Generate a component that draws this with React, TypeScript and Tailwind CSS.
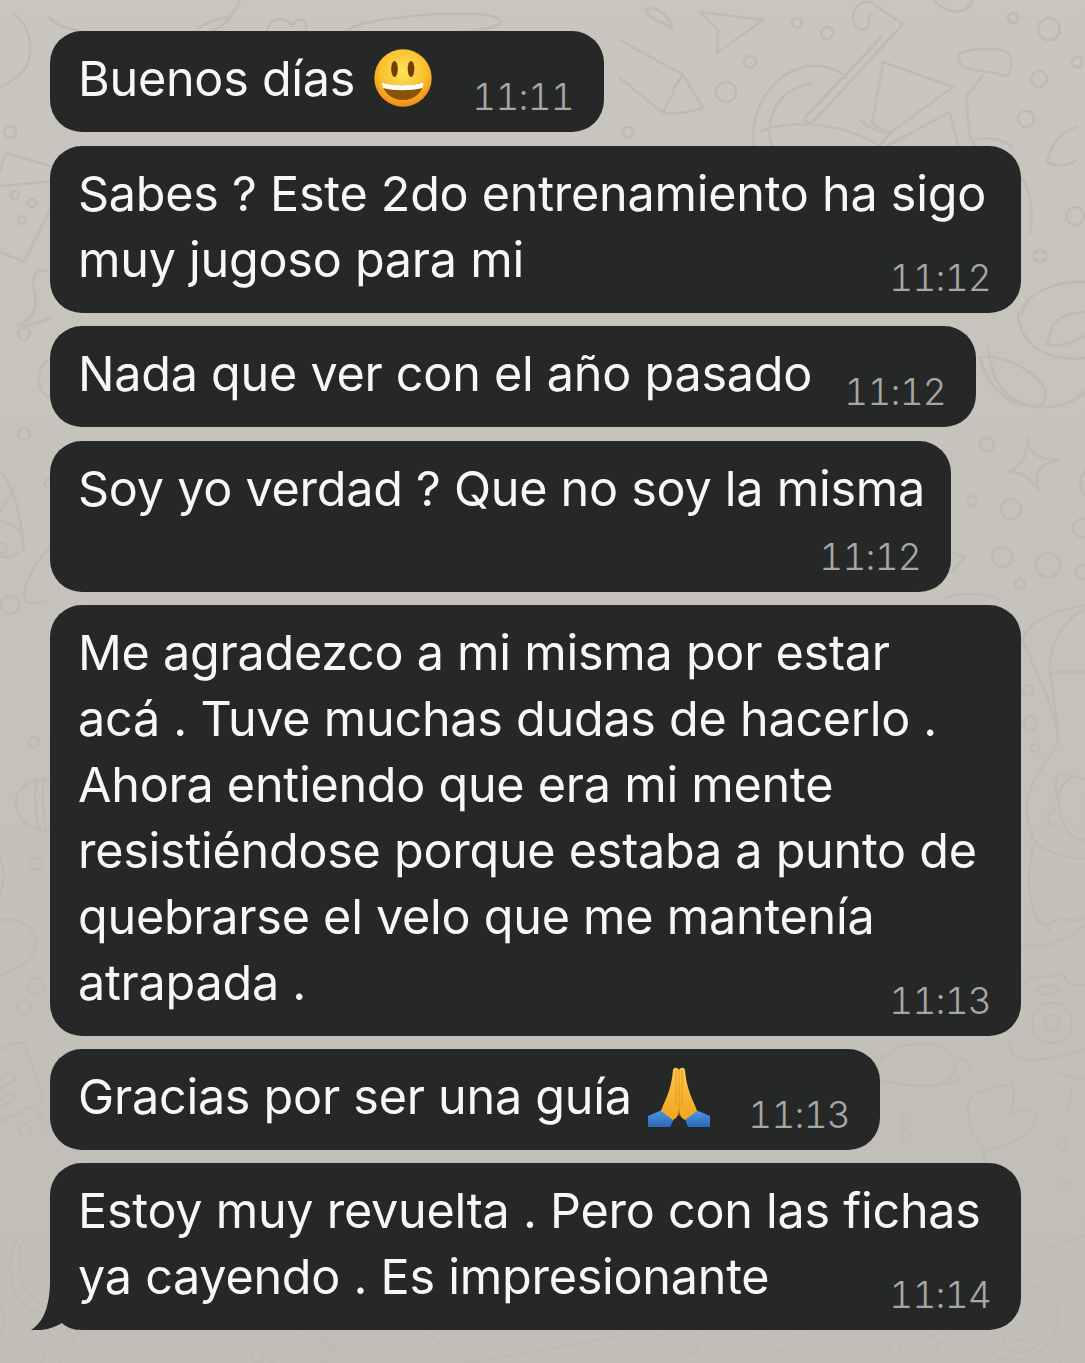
import React from "react";

const circles: [number, number, number][] = [
  [797,23,5],[827,33,6],[750,62,6],[726,92,10],[628,132,5],[1013,18,5],[1049,29,11],[1077,62,5],[1039,79,8],[1026,119,8],[1040,256,6],[1075,216,9],
  [987,445,7],[972,501,5],[1011,509,10],[1002,557,10],[1048,565,12],[1020,584,5],[1082,528,9],[1082,572,7],
  [1028,690,5],[1030,723,7],[1035,748,4],
  [10,132,6],[15,195,4],[32,203,4],[22,220,4],[24,334,6],[24,434,6],[2,548,5],[10,605,9],[34,742,5],
  [35,864,6],[36,986,8],[24,1007,7],[906,1120,4],[906,1135,5],[1062,1145,5],[1067,1184,4],
  [25,1130,6],[46,1126,3],[40,1115,3],[895,1348,6],[930,1345,8],[257,1357,6],[273,1358,4],
];

const doodles: string[] = [
  // upper-left
  "M14 14C34 28 34 62 22 72C14 80 6 84 0 88",
  "M50 18C60 30 76 28 90 34",
  "M267 30C272 14 288 18 292 26C298 14 312 20 304 32C298 40 288 44 278 46C270 42 265 36 267 30Z",
  "M345 32C350 22 420 12 470 14C490 14 504 18 500 24C480 34 420 34 380 38L346 42Z",
  "M195 34C200 22 220 18 232 16C222 28 200 40 195 34Z",
  "M240 0C236 10 232 16 225 22",
  // pencil / arrow / bike
  "M620 40L683 75L703 108C690 112 676 114 663 113L620 78",
  "M683 75C678 82 672 88 673 94C668 100 666 106 663 113",
  "M700 12L763 20L717 53L718 30Z",
  "M645 10C652 6 668 10 673 30C664 20 650 22 645 10",
  "M934 0C944 12 966 18 972 0",
  // bicycle
  "M754 146C748 110 775 68 812 66C826 65 840 70 846 78",
  "M772 146C762 120 780 86 812 84",
  "M805 117C803 121 810 125 813 122L903 24L870 2C858 0 852 12 853 20C855 28 862 32 868 28L870 14",
  "M805 117L860 60L882 36",
  "M883 62L953 87L890 133L872 124L883 62M880 146L890 133",
  "M860 120C868 128 878 132 890 133M887 146L950 112L958 146",
  "M960 53C975 48 1005 46 1010 56C1013 66 1010 76 1005 76C990 70 970 72 962 66C958 62 958 56 960 53Z",
  "M983 75L966 97L970 137L975 146",
  "M975 139C995 136 1005 142 1012 146",
  // right of bubble 2
  "M1077 127C1060 130 1050 148 1047 162C1058 168 1072 164 1077 160",
  "M1022 178C1030 190 1034 210 1030 233",
  "M1085 282C1050 280 1022 298 1022 315",
  "M1018 313C1020 345 1046 362 1085 358",
  "M1047 345L1053 325C1060 316 1074 312 1085 312M1047 345C1062 346 1076 342 1085 336",
  "M988 346C992 380 1000 400 1038 407C1058 408 1075 402 1085 392",
  "M980 357C1005 355 1035 370 1045 390C1048 402 1040 408 1030 406C1000 404 984 376 980 357Z",
  // star
  "M1027 438C1029 454 1034 458 1058 460C1040 464 1034 470 1038 490C1030 478 1024 472 1008 472C1022 466 1028 456 1027 438Z",
  "M952 552L965 557L952 572",
  "M1085 470C1078 480 1080 490 1085 495",
  "M1085 605C1050 612 1030 620 1022 640",
  "M945 598C960 592 985 592 1000 600",
  // right bear
  "M1022 640C1040 680 1058 716 1058 740C1054 760 1025 776 1027 813C1030 840 1040 846 1035 843C1023 880 1030 920 1050 930",
  "M1085 608C1060 622 1048 650 1050 672C1054 700 1058 720 1058 740",
  "M1085 672C1070 672 1055 670 1050 676",
  "M1085 780C1070 770 1060 785 1058 800C1062 830 1070 840 1085 840",
  "M1058 800C1050 780 1060 770 1072 775",
  "M1056 808C1046 810 1046 828 1056 824",
  "M1035 843C1050 854 1072 860 1085 858",
  "M1032 910C1036 928 1052 928 1056 918C1066 920 1076 922 1085 918",
  "M1022 945C1050 950 1070 938 1085 925",
  "M1024 985C1030 972 1050 980 1062 974L1070 985L1085 985",
  "M1036 990C1046 984 1056 984 1060 990C1050 996 1040 996 1036 990Z",
  "M1052 1003A20 20 0 1 1 1052 1043A20 20 0 1 1 1052 1003M1052 1015A8 8 0 1 1 1052 1031A8 8 0 1 1 1052 1015",
  // left
  "M6 153L50 166M6 153L0 170M0 186C30 184 40 182 50 181M0 252L24 262L50 210",
  "M50 272C36 266 32 276 34 290C38 302 36 318 18 326C30 326 42 322 50 318",
  "M50 360C36 364 34 390 50 398",
  "M0 471C16 486 22 530 24 550C14 556 6 558 0 556M0 512C6 500 10 498 14 488M0 520C8 524 18 526 22 534",
  "M50 478C44 480 42 486 50 488",
  "M50 548C34 562 24 586 24 596C24 606 36 604 50 600",
  "M50 780C30 776 16 790 16 800C16 820 30 832 50 830M36 780C34 800 36 820 40 830M44 778C42 800 44 820 46 830",
  "M0 855C4 870 6 880 0 895",
  "M0 920C20 918 36 925 36 945C32 965 14 970 0 975",
  "M0 1050C10 1045 22 1040 24 1044L44 1100C32 1108 14 1114 0 1122",
  "M0 1080C8 1072 14 1072 16 1076C14 1082 6 1086 0 1088M0 1100C6 1094 16 1090 16 1094C14 1100 6 1104 0 1106",
  "M17 1240C10 1250 6 1276 18 1296C24 1306 32 1312 40 1312M24 1240C16 1250 18 1280 30 1296C36 1302 42 1304 46 1304",
  "M42 1363C44 1348 50 1335 50 1332M0 1300C4 1310 4 1330 0 1340",
  // between & under
  "M760 132C780 120 840 120 880 146",
  "M880 1060C900 1040 940 1036 955 1060C958 1070 950 1082 940 1082M955 1060C962 1058 970 1060 970 1072M880 1080C920 1090 950 1085 960 1080",
  "M1010 1040C1010 1050 1012 1058 1030 1060C1050 1060 1085 1050 1085 1048",
  "M1060 1072C1070 1076 1078 1080 1085 1078M1072 1085L1068 1108",
  "M968 1110C965 1095 980 1090 1012 1084C1016 1095 1012 1110 1008 1118C1020 1108 1036 1108 1036 1118C1034 1135 1010 1145 985 1150C975 1140 968 1125 968 1110Z",
  "M985 1150C982 1156 984 1160 986 1163",
  "M1022 1284C1050 1285 1062 1305 1057 1325C1050 1350 1030 1362 1005 1360C995 1358 990 1350 988 1345",
  "M1003 1337C1016 1342 1034 1340 1043 1333C1042 1345 1030 1352 1020 1352C1010 1352 1005 1345 1003 1337Z",
  "M1028 1262C1045 1248 1065 1240 1085 1236",
  "M1080 1340L1060 1363",
  "M950 1330L945 1345L930 1335",
  "M80 1330L60 1363M320 1336C340 1350 330 1363 320 1363",
  "M300 1336L345 1350M430 1336L470 1363L620 1336",
  "M660 1335L695 1355L700 1335M760 1335L780 1352L800 1335",
];

function Smiley() {
  return (
    <svg width="60" height="60" viewBox="0 0 60 60" className="shrink-0 -mt-[2px]">
      <defs>
        <radialGradient id="face" cx="50%" cy="38%" r="62%">
          <stop offset="0%" stopColor="#fde35c" />
          <stop offset="65%" stopColor="#fbbf2c" />
          <stop offset="100%" stopColor="#ee8a17" />
        </radialGradient>
      </defs>
      <circle cx="30" cy="30" r="28.7" fill="url(#face)" />
      <ellipse cx="21.5" cy="21" rx="3.3" ry="8" fill="#6b3f05" />
      <ellipse cx="38" cy="21" rx="3.3" ry="8" fill="#6b3f05" />
      <path d="M9 34.5C20 38 39 38 50.5 34.5C50 44 42 52 30 52C18 52 10 44 9 34.5Z" fill="#8a5206" />
      <path d="M9 34.5C20 38 39 38 50.5 34.5C50.4 37 50 38.5 49.4 40C38 43 21 43 10 40C9.5 38.5 9.1 37 9 34.5Z" fill="#fdfdf8" />
    </svg>
  );
}

function Pray() {
  return (
    <svg width="63" height="62" viewBox="0 0 63 62" className="shrink-0">
      <defs>
        <linearGradient id="hand" x1="0" y1="0" x2="0" y2="1">
          <stop offset="0%" stopColor="#fdc94a" />
          <stop offset="100%" stopColor="#f3a31f" />
        </linearGradient>
        <linearGradient id="sleeve" x1="0" y1="0" x2="0" y2="1">
          <stop offset="0%" stopColor="#4f97e8" />
          <stop offset="100%" stopColor="#2d67b8" />
        </linearGradient>
      </defs>
      <path d="M0 50L14 44L26 53L22 61L0 61Z" fill="url(#sleeve)" />
      <path d="M62 50L48 44L37 53L40 61L62 61Z" fill="url(#sleeve)" />
      <path d="M27 2C25.5 2 25 3.5 24.8 6C24 13 23 18 21.5 23C19.5 31 15 38 13 45L25 54L28 52C30 50 31 47 31 42L31 4C30 2.5 28.5 1.5 27 2Z" fill="url(#hand)" />
      <path d="M35 2C36.5 2 37 3.5 37.2 6C38 13 39 18 40.5 23C42.5 31 47 38 49 45L37 54L34 52C32 50 31 47 31 42L31 4C32 2.5 33.5 1.5 35 2Z" fill="url(#hand)" />
      <path d="M28 4L28 40M34 4L34 40M31 4L31 50" stroke="#dd8f17" strokeWidth="0.8" fill="none" />
    </svg>
  );
}

function Time({ children, className = "" }: { children: React.ReactNode; className?: string }) {
  return (
    <span className={"font-['Inter',sans-serif] tabular-nums text-[37px] leading-[30px] tracking-[-0.8px] text-[#a6a8a7] font-light whitespace-nowrap " + className}>
      {children}
    </span>
  );
}

function Line({ children }: { children: React.ReactNode }) {
  return <div className="whitespace-nowrap">{children}</div>;
}

const text = "font-['Inter',sans-serif] text-[48.5px] leading-[66px] text-[#f7f7f7] tracking-[-0.25px]";

export default function App() {
  return (
    <div className="relative w-[1085px] h-[1363px] overflow-hidden bg-gradient-to-b from-[#c8c6bf] to-[#c1beb7]">
      <svg className="absolute inset-0" width="1085" height="1363" viewBox="0 0 1085 1363" fill="none" stroke="#bebbb4" strokeWidth="2.6" strokeLinecap="round" strokeLinejoin="round">
        {doodles.map((d, i) => (
          <path key={i} d={d} />
        ))}
        {circles.map(([x, y, r], i) => (
          <circle key={i} cx={x} cy={y} r={r} />
        ))}
      </svg>

      <div className={"relative flex flex-col gap-[13px] pt-[31px] pl-[50px] " + text}>
        <div className="flex items-end justify-between w-[554px] rounded-[32px] bg-[#262828] pl-[28px] pr-[30px] pt-[15px] pb-[20px]">
          <div className="flex items-center gap-[18px]">
            <Line>Buenos días</Line>
            <Smiley />
          </div>
          <Time>11:11</Time>
        </div>

        <div className="mt-px flex items-end justify-between w-[971px] rounded-[32px] bg-[#262828] pl-[28px] pr-[30px] pt-[15px] pb-[20px]">
          <div>
            <Line>Sabes ? Este 2do entrenamiento ha sigo</Line>
            <Line>muy jugoso para mi</Line>
          </div>
          <Time className="-ml-[200px]">11:12</Time>
        </div>

        <div className="flex items-end justify-between w-[926px] rounded-[32px] bg-[#262828] pl-[28px] pr-[30px] pt-[15px] pb-[20px]">
          <Line>Nada que ver con el año pasado</Line>
          <Time>11:12</Time>
        </div>

        <div className="mt-px flex flex-col w-[901px] rounded-[32px] bg-[#262828] pl-[28px] pr-[30px] pt-[15px] pb-[20px]">
          <Line>Soy yo verdad ? Que no soy la misma</Line>
          <Time className="self-end mt-[20px]">11:12</Time>
        </div>

        <div className="flex items-end justify-between w-[971px] rounded-[32px] bg-[#262828] pl-[28px] pr-[30px] pt-[15px] pb-[20px]">
          <div>
            <Line>Me agradezco a mi misma por estar</Line>
            <Line>acá . Tuve muchas dudas de hacerlo .</Line>
            <Line>Ahora entiendo que era mi mente</Line>
            <Line>resistiéndose porque estaba a punto de</Line>
            <Line>quebrarse el velo que me mantenía</Line>
            <Line>atrapada .</Line>
          </div>
          <Time className="-ml-[200px]">11:13</Time>
        </div>

        <div className="flex items-end justify-between w-[830px] rounded-[32px] bg-[#262828] pl-[28px] pr-[30px] pt-[15px] pb-[20px]">
          <div className="flex items-center gap-[16px]">
            <Line>Gracias por ser una guía</Line>
            <Pray />
          </div>
          <Time>11:13</Time>
        </div>

        <div className="relative flex items-end justify-between w-[971px] rounded-[32px] bg-[#262828] pl-[28px] pr-[30px] pt-[15px] pb-[20px]">
          <svg className="absolute left-[-19px] bottom-0" width="48" height="50" viewBox="0 0 48 50">
            <path d="M19 0C19 25 13 42 0 50C13 51 23 48 31 43C36 47 40 49 47 50L47 0Z" fill="#262828" />
          </svg>
          <div>
            <Line>Estoy muy revuelta . Pero con las fichas</Line>
            <Line>ya cayendo . Es impresionante</Line>
          </div>
          <Time className="-ml-[200px]">11:14</Time>
        </div>
      </div>
    </div>
  );
}
